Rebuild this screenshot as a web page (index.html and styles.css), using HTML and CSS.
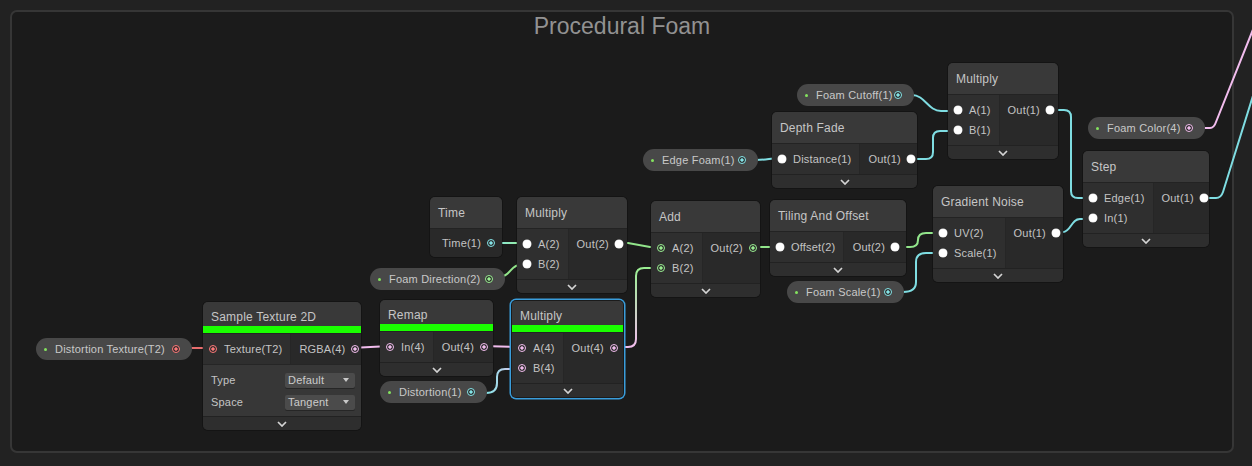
FILE: index.html
```html
<!DOCTYPE html>
<html lang="en">
<head>
    <meta charset="UTF-8">
    <title>Shader Graph - Procedural Foam</title>
    <link rel="stylesheet" href="styles.css">
</head>
<body>
<div class="canvas">

    <div class="group">
        <div class="group-title">Procedural Foam</div>
    </div>

    <svg class="wires" width="1252" height="466" viewBox="0 0 1252 466">
        <defs>
            <linearGradient id="gTime" gradientUnits="userSpaceOnUse" x1="491" y1="0" x2="527" y2="0">
                <stop offset="0" stop-color="#84e4e7"/>
                <stop offset="1" stop-color="#9aef92"/>
            </linearGradient>
            <linearGradient id="gAddB" gradientUnits="userSpaceOnUse" x1="0" y1="347" x2="0" y2="268">
                <stop offset="0" stop-color="#f2bdee"/>
                <stop offset="1" stop-color="#9aef92"/>
            </linearGradient>
            <linearGradient id="gDist" gradientUnits="userSpaceOnUse" x1="487" y1="0" x2="522" y2="0">
                <stop offset="0" stop-color="#84e4e7"/>
                <stop offset="1" stop-color="#f2bdee"/>
            </linearGradient>
        </defs>
        <!-- float wires -->
        <path class="w cyan" d="M912 95 C925 95 928 111 941 111 H958"/>
        <path class="w cyan" d="M907 159 H926 Q933 159 933 152 V138 Q933 131 940 131 H958"/>
        <path class="w cyan" d="M756 160 C768 160 770 158 782 158"/>
        <path class="w cyan" d="M1048 110 H1064 Q1071 110 1071 117 V191 Q1071 198 1078 198 H1093"/>
        <path class="w cyan" d="M1053 232 H1063 C1071 232 1071 219 1080 219 H1093"/>
        <path class="w cyan" d="M903 292 Q916 292 916 282 V262 Q916 253 926 253 H943"/>
        <path class="w cyan" d="M1199 198 H1216 Q1221 198 1223 192 L1256 86"/>
        <!-- vector2 wires -->
        <path class="w green" d="M897 247 H910 Q918 247 918 240 Q918 233 926 233 H943"/>
        <path class="w green" d="M750 247 H781"/>
        <path class="w green" d="M617 243 H628 L650 247 H660"/>
        <path class="w green" d="M504 276 C512 272 512 265 520 265 H527"/>
        <path class="w" stroke="url(#gTime)" d="M491 243 H527"/>
        <!-- vector4 / texture wires -->
        <path class="w" stroke="url(#gAddB)" d="M615 347 H628 Q636 347 636 339 V276 Q636 268 644 268 H660"/>
        <path class="w pink" d="M351 348 L390 346"/>
        <path class="w pink" d="M483 346 L522 347"/>
        <path class="w" stroke="url(#gDist)" d="M486 393 Q497 393 497 383 V377 Q497 369 505 369 H522"/>
        <path class="w pink" d="M1204 128 H1210 Q1214 128 1216 122 L1256 22"/>
        <path class="w red" d="M191 348 H213"/>
    </svg>

    <!-- properties -->
    <div class="pill pill-cutoff"><span class="pill-dot"></span>Foam Cutoff(1)<span class="p p-cyan"></span></div>
    <div class="pill pill-color"><span class="pill-dot"></span>Foam Color(4)<span class="p p-pink"></span></div>
    <div class="pill pill-edge"><span class="pill-dot"></span>Edge Foam(1)<span class="p p-cyan"></span></div>
    <div class="pill pill-dir"><span class="pill-dot"></span>Foam Direction(2)<span class="p p-green"></span></div>
    <div class="pill pill-scale"><span class="pill-dot"></span>Foam Scale(1)<span class="p p-cyan"></span></div>
    <div class="pill pill-tex"><span class="pill-dot"></span>Distortion Texture(T2)<span class="p p-red"></span></div>
    <div class="pill pill-dist"><span class="pill-dot"></span>Distortion(1)<span class="p p-cyan"></span></div>

    <!-- nodes -->
    <div class="node n-mul-cut">
        <div class="node-title">Multiply</div>
        <div class="ports">
            <div class="inputs">
                <div class="port"><span class="p p-dyn"></span>A(1)</div>
                <div class="port"><span class="p p-dyn"></span>B(1)</div>
            </div>
            <div class="outputs">
                <div class="port">Out(1)<span class="p p-dyn"></span></div>
            </div>
        </div>
        <div class="node-foot"><svg width="10" height="6" viewBox="0 0 10 6"><polyline points="1,1 5,5 9,1"/></svg></div>
    </div>

    <div class="node n-depth">
        <div class="node-title">Depth Fade</div>
        <div class="ports">
            <div class="inputs">
                <div class="port"><span class="p p-dyn"></span>Distance(1)</div>
            </div>
            <div class="outputs">
                <div class="port">Out(1)<span class="p p-dyn"></span></div>
            </div>
        </div>
        <div class="node-foot"><svg width="10" height="6" viewBox="0 0 10 6"><polyline points="1,1 5,5 9,1"/></svg></div>
    </div>

    <div class="node n-step">
        <div class="node-title">Step</div>
        <div class="ports">
            <div class="inputs">
                <div class="port"><span class="p p-dyn"></span>Edge(1)</div>
                <div class="port"><span class="p p-dyn"></span>In(1)</div>
            </div>
            <div class="outputs">
                <div class="port">Out(1)<span class="p p-dyn"></span></div>
            </div>
        </div>
        <div class="node-foot"><svg width="10" height="6" viewBox="0 0 10 6"><polyline points="1,1 5,5 9,1"/></svg></div>
    </div>

    <div class="node n-grad">
        <div class="node-title">Gradient Noise</div>
        <div class="ports">
            <div class="inputs">
                <div class="port"><span class="p p-dyn"></span>UV(2)</div>
                <div class="port"><span class="p p-dyn"></span>Scale(1)</div>
            </div>
            <div class="outputs">
                <div class="port">Out(1)<span class="p p-dyn"></span></div>
            </div>
        </div>
        <div class="node-foot"><svg width="10" height="6" viewBox="0 0 10 6"><polyline points="1,1 5,5 9,1"/></svg></div>
    </div>

    <div class="node n-tiling">
        <div class="node-title">Tiling And Offset</div>
        <div class="ports">
            <div class="inputs">
                <div class="port"><span class="p p-dyn"></span>Offset(2)</div>
            </div>
            <div class="outputs">
                <div class="port">Out(2)<span class="p p-dyn"></span></div>
            </div>
        </div>
        <div class="node-foot"><svg width="10" height="6" viewBox="0 0 10 6"><polyline points="1,1 5,5 9,1"/></svg></div>
    </div>

    <div class="node n-add">
        <div class="node-title">Add</div>
        <div class="ports">
            <div class="inputs">
                <div class="port"><span class="p p-green"></span>A(2)</div>
                <div class="port"><span class="p p-green"></span>B(2)</div>
            </div>
            <div class="outputs">
                <div class="port">Out(2)<span class="p p-green"></span></div>
            </div>
        </div>
        <div class="node-foot"><svg width="10" height="6" viewBox="0 0 10 6"><polyline points="1,1 5,5 9,1"/></svg></div>
    </div>

    <div class="node n-time">
        <div class="node-title">Time</div>
        <div class="ports ports-tight">
            <div class="outputs">
                <div class="port">Time(1)<span class="p p-cyan"></span></div>
            </div>
        </div>
    </div>

    <div class="node n-mul-dir">
        <div class="node-title">Multiply</div>
        <div class="ports">
            <div class="inputs">
                <div class="port"><span class="p p-dyn"></span>A(2)</div>
                <div class="port"><span class="p p-dyn"></span>B(2)</div>
            </div>
            <div class="outputs">
                <div class="port">Out(2)<span class="p p-dyn"></span></div>
            </div>
        </div>
        <div class="node-foot"><svg width="10" height="6" viewBox="0 0 10 6"><polyline points="1,1 5,5 9,1"/></svg></div>
    </div>

    <div class="node n-sample">
        <div class="node-title has-bar">Sample Texture 2D</div>
        <div class="preview-bar"></div>
        <div class="ports">
            <div class="inputs">
                <div class="port"><span class="p p-red"></span>Texture(T2)</div>
            </div>
            <div class="outputs">
                <div class="port">RGBA(4)<span class="p p-pink"></span></div>
            </div>
        </div>
        <div class="settings">
            <div class="setting"><span>Type</span><div class="dropdown">Default<span class="caret"></span></div></div>
            <div class="setting"><span>Space</span><div class="dropdown">Tangent<span class="caret"></span></div></div>
        </div>
        <div class="node-foot"><svg width="10" height="6" viewBox="0 0 10 6"><polyline points="1,1 5,5 9,1"/></svg></div>
    </div>

    <div class="node n-remap">
        <div class="node-title has-bar">Remap</div>
        <div class="preview-bar"></div>
        <div class="ports">
            <div class="inputs">
                <div class="port"><span class="p p-pink"></span>In(4)</div>
            </div>
            <div class="outputs">
                <div class="port">Out(4)<span class="p p-pink"></span></div>
            </div>
        </div>
        <div class="node-foot"><svg width="10" height="6" viewBox="0 0 10 6"><polyline points="1,1 5,5 9,1"/></svg></div>
    </div>

    <div class="node n-mul-sel selected">
        <div class="node-title has-bar">Multiply</div>
        <div class="preview-bar"></div>
        <div class="ports">
            <div class="inputs">
                <div class="port"><span class="p p-pink"></span>A(4)</div>
                <div class="port"><span class="p p-pink"></span>B(4)</div>
            </div>
            <div class="outputs">
                <div class="port">Out(4)<span class="p p-pink"></span></div>
            </div>
        </div>
        <div class="node-foot"><svg width="10" height="6" viewBox="0 0 10 6"><polyline points="1,1 5,5 9,1"/></svg></div>
    </div>

</div>
</body>
</html>
```

FILE: styles.css
```css
body {
    margin: 0;
    background: #222222;
    font-family: "Liberation Sans", Arial, sans-serif;
    color: #c4c4c4;
    font-size: 11px;
    letter-spacing: 0.2px;
}
.canvas {
    position: relative;
    width: 1252px;
    height: 466px;
    overflow: hidden;
    padding-top: 10px;
    box-sizing: border-box;
}
.group {
    margin: 0 18px 0 10px;
    height: 443px;
    background: #1b1b1b;
    border: 2px solid #363636;
    border-radius: 7px;
    box-sizing: border-box;
}
.group-title {
    text-align: center;
    font-size: 23px;
    line-height: 29px;
    letter-spacing: 0;
    color: #929292;
}
.wires {
    position: absolute;
    left: 0;
    top: 0;
}
.w {
    fill: none;
    stroke-width: 2;
}
.w.cyan { stroke: #7fdde2; }
.w.green { stroke: #92e58b; }
.w.pink { stroke: #f2bdee; }
.w.red { stroke: #e86d6d; }

/* ports */
.p {
    flex: none;
    width: 8px;
    height: 8px;
    border-radius: 50%;
    box-sizing: border-box;
}
.p-dyn {
    background: #ffffff;
    box-shadow: 0 0 0 0.5px #dddddd;
}
.p-cyan {
    border: 1.5px solid #84e4e7;
    background: radial-gradient(circle, #84e4e7 0 1.4px, #2a2a2a 1.9px);
}
.p-green {
    border: 1.5px solid #9aef92;
    background: radial-gradient(circle, #9aef92 0 1.4px, #2a2a2a 1.9px);
}
.p-pink {
    border: 1.5px solid #f2bdee;
    background: radial-gradient(circle, #f2bdee 0 1.4px, #2a2a2a 1.9px);
}
.p-red {
    border: 1.5px solid #ff7878;
    background: radial-gradient(circle, #ff7878 0 1.4px, #2a2a2a 1.9px);
}

/* property pills */
.pill {
    position: absolute;
    height: 22px;
    display: flex;
    align-items: center;
    padding: 0 12px 0 8px;
    box-sizing: border-box;
    background: #484848;
    border-radius: 11px;
    color: #c8c8c8;
    white-space: nowrap;
}
.pill .p {
    margin-left: auto;
}
.pill-dot {
    width: 3px;
    height: 3px;
    border-radius: 50%;
    background: #84e35f;
    margin-right: 8px;
}
.pill-cutoff { left: 797px; top: 84px; width: 117px; }
.pill-color { left: 1088px; top: 117px; width: 117px; }
.pill-edge { left: 643px; top: 149px; width: 115px; }
.pill-dir { left: 370px; top: 268px; width: 135px; }
.pill-scale { left: 787px; top: 281px; width: 117px; }
.pill-tex { left: 36px; top: 338px; width: 156px; }
.pill-dist { left: 380px; top: 381px; width: 107px; }

/* nodes */
.node {
    position: absolute;
    background: #2a2a2a;
    border-radius: 5px;
    overflow: hidden;
    box-shadow: 0 0 0 1px rgba(0, 0, 0, 0.25);
    box-sizing: border-box;
}
.node.selected {
    border-radius: 4px;
    box-shadow: 0 0 0 1px #1b1b1b, 0 0 0 2.5px #3a9ddb;
}
.node-title {
    height: 32px;
    line-height: 32px;
    padding-left: 8px;
    background: #393939;
    font-size: 12px;
    color: #c6c6c6;
    white-space: nowrap;
}
.node-title.has-bar {
    height: 24px;
    line-height: 30px;
}
.preview-bar {
    height: 8px;
    background: #1aff00;
}
.ports {
    display: flex;
    border-top: 1px solid #232323;
    margin-top: -1px;
}
.inputs {
    background: #2f2f2f;
    padding: 5px 8px 5px 6px;
    border-right: 1px solid #262626;
}
.outputs {
    flex: 1;
    background: #292929;
    padding: 5px 7px 5px 8px;
}
.ports-tight .outputs {
    padding-top: 4px;
    padding-bottom: 4px;
}
.port {
    height: 20px;
    display: flex;
    align-items: center;
    gap: 7px;
    white-space: nowrap;
}
.outputs .port {
    justify-content: flex-end;
    gap: 6px;
}
.node-foot {
    height: 14px;
    border-top: 1px solid #222222;
    background: #2e2e2e;
    display: flex;
    align-items: center;
    justify-content: center;
    box-sizing: border-box;
}
.node-foot polyline {
    fill: none;
    stroke: #d4d4d4;
    stroke-width: 1.7;
}
.settings {
    background: #373737;
    border-top: 1px solid #262626;
    padding: 4px 6px 3px 8px;
}
.setting {
    height: 22px;
    display: flex;
    align-items: center;
    justify-content: space-between;
}
.dropdown {
    width: 70px;
    height: 15px;
    line-height: 15px;
    padding-left: 3px;
    box-sizing: border-box;
    background: #4b4b4b;
    border-radius: 2px;
    box-shadow: 0 1px 0 #262626;
    display: flex;
    align-items: center;
    color: #cccccc;
}
.caret {
    margin-left: auto;
    margin-right: 6px;
    width: 0;
    height: 0;
    border-left: 3.5px solid transparent;
    border-right: 3.5px solid transparent;
    border-top: 4px solid #c8c8c8;
}

.n-mul-cut { left: 948px; top: 63px; width: 110px; }
.n-depth { left: 772px; top: 112px; width: 145px; }
.n-step { left: 1083px; top: 151px; width: 126px; }
.n-grad { left: 933px; top: 186px; width: 130px; }
.n-tiling { left: 770px; top: 200px; width: 136px; }
.n-add { left: 651px; top: 201px; width: 109px; }
.n-time { left: 430px; top: 197px; width: 72px; }
.n-mul-dir { left: 517px; top: 197px; width: 110px; }
.n-sample { left: 203px; top: 302px; width: 158px; }
.n-remap { left: 380px; top: 300px; width: 113px; }
.n-mul-sel { left: 512px; top: 301px; width: 111px; }
```
